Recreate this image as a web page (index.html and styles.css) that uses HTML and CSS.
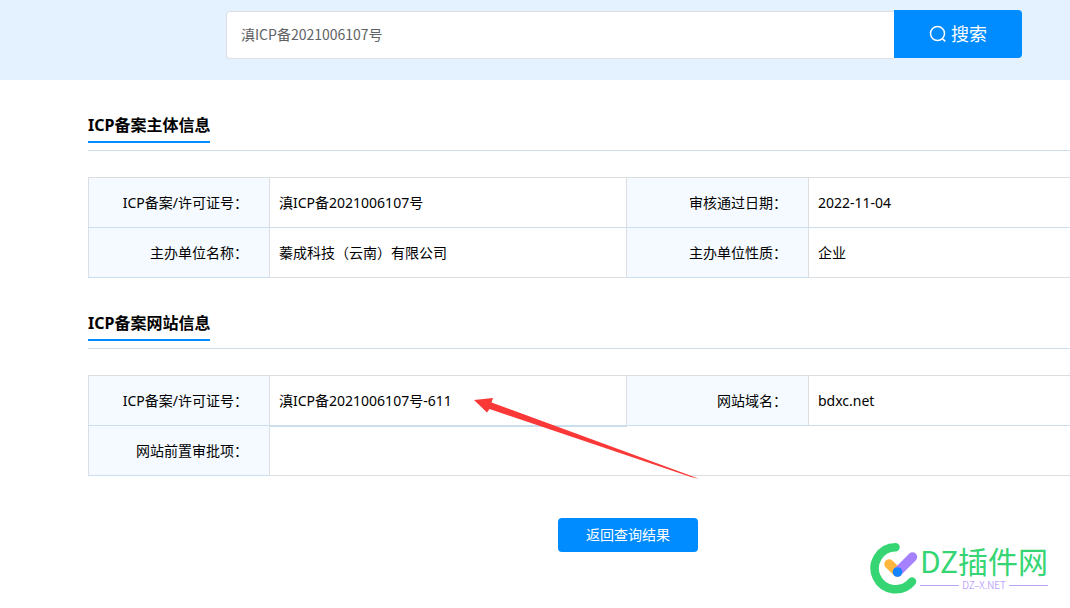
FILE: index.html
```html
<!DOCTYPE html>
<html lang="zh-CN">
<head>
<meta charset="utf-8">
<title>ICP备案查询</title>
<link rel="stylesheet" href="styles.css">
</head>
<body>
<header class="search-band">
  <form class="search">
    <input class="search-input" type="text" aria-label="备案号" value="滇ICP备2021006107号">
    <button class="search-button" type="button">
      <svg class="search-icon" viewBox="0 0 18 18" aria-hidden="true"><circle cx="8.5" cy="8.5" r="7"/><path d="M13.3 13.6 16.3 16.4"/></svg>
      搜索
    </button>
  </form>
</header>
<main class="content">
  <section class="block">
    <div class="block-head"><h2 class="block-title">ICP备案主体信息</h2></div>
    <table class="info">
      <tr><th scope="row">ICP备案/许可证号：</th><td class="number">滇ICP备2021006107号</td><th class="wide" scope="row">审核通过日期：</th><td>2022-11-04</td></tr>
      <tr><th scope="row">主办单位名称：</th><td>蓁成科技（云南）有限公司</td><th scope="row">主办单位性质：</th><td>企业</td></tr>
    </table>
  </section>
  <section class="block">
    <div class="block-head"><h2 class="block-title">ICP备案网站信息</h2></div>
    <table class="info">
      <tr><th scope="row">ICP备案/许可证号：</th><td class="number marked">滇ICP备2021006107号-611</td><th class="wide" scope="row">网站域名：</th><td>bdxc.net</td></tr>
      <tr><th scope="row">网站前置审批项：</th><td colspan="3"></td></tr>
    </table>
  </section>
  <div class="actions"><button class="back-button" type="button">返回查询结果</button></div>
</main>
<svg class="arrow" viewBox="0 0 226 82" aria-hidden="true"><path d="M0 2 19 0 17.500 4.500 225 80.800 217 79 15.500 11 13 14.500Z"/></svg>
<div class="brand">
  <svg class="brand-mark" viewBox="0 0 48 52" aria-hidden="true">
    <path d="M25.500 5.300A21 21 0 1 0 42 39.500" fill="none" stroke="#36d574" stroke-width="8.500" stroke-linecap="round"/>
    <path d="M19 22 27.500 30" stroke="#ffb63e" stroke-width="9.500" stroke-linecap="round"/>
    <path d="M27.500 30 42.500 15" stroke="#a581ff" stroke-width="9.500" stroke-linecap="round"/>
    <circle cx="27.500" cy="30" r="4.800" fill="#1683ff"/>
  </svg>
  <div class="brand-text">
    <span class="brand-name">DZ插件网</span>
    <span class="brand-domain">DZ–X.NET</span>
  </div>
</div>
</body>
</html>
```
FILE: styles.css
```css
* { box-sizing: border-box; }
body {
  position: relative;
  margin: 0;
  min-height: 100vh;
  overflow-x: hidden;
  background: #fff;
  color: #000;
  font: 14px/20px "Noto Sans", "Noto Sans CJK SC", sans-serif;
}
button, input { font: inherit; }
.search-band { height: 80px; padding: 10px 48px 0 226px; background: #e4f2ff; }
.search { display: flex; }
.search-input {
  flex: 1;
  min-width: 0;
  height: 48px;
  margin-top: 1px;
  padding: 0 14px 2px;
  border: 1px solid #dcdfe6;
  border-right: 0;
  border-radius: 4px 0 0 4px;
  background: #fff;
  color: #606266;
  font-family: "Noto Sans CJK SC", sans-serif;
}
.search-button {
  display: flex;
  align-items: center;
  justify-content: center;
  gap: 4px;
  width: 128px;
  height: 48px;
  padding: 0;
  border: 0;
  border-radius: 0 4px 4px 0;
  background: #008cff;
  color: #fff;
  font-size: 18px;
}
.search-icon { width: 18px; height: 18px; fill: none; stroke: #fff; stroke-width: 1.5; }
.content { min-width: 1080px; margin-left: 88px; padding-top: 32px; }
.block { margin-bottom: 32px; }
.block-head { display: flex; padding-bottom: 7px; border-bottom: 1px solid #cadeee; }
.block-title {
  margin: 0;
  padding-bottom: 3px;
  border-bottom: 2px solid #008cff;
  font-size: 16px;
  line-height: 26px;
}
.info { width: 100%; margin-top: 26px; border-collapse: collapse; table-layout: fixed; }
.info th, .info td { height: 50px; padding: 0 9px; border: 1px solid #dcdfe1; border-bottom-color: #cadeee; text-align: left; }
.info th { width: 181px; padding-right: 21px; background: #f4faff; font-weight: 400; text-align: right; }
.info .wide { width: 182px; }
.info .number { width: 357px; }
.info tr:last-child td { border-bottom-color: #dcdfe1; }
.info .marked { box-shadow: 0 1px #cadeee; }
.actions { display: flex; justify-content: center; padding-top: 10px; }
.back-button { width: 140px; height: 34px; padding: 0; border: 0; border-radius: 4px; background: #008cff; color: #fff; }
.arrow { position: absolute; left: 474px; top: 398px; width: 226px; height: 82px; fill: #fb3838; }
.brand { position: absolute; left: 870px; top: 542px; display: flex; }
.brand-mark { width: 48px; height: 52px; }
.brand-text { display: flex; flex-direction: column; margin-left: 2px; font-family: "Noto Sans CJK SC", sans-serif; }
.brand-name { color: #36d574; font-size: 30px; line-height: 36px; white-space: nowrap; }
.brand-domain { display: flex; align-items: center; gap: 3px; color: #a581ff; font-size: 10px; font-weight: 300; line-height: 14px; white-space: nowrap; }
.brand-domain::before, .brand-domain::after { content: ""; flex: 1; height: 1px; background: #b9a5ef; }
```
